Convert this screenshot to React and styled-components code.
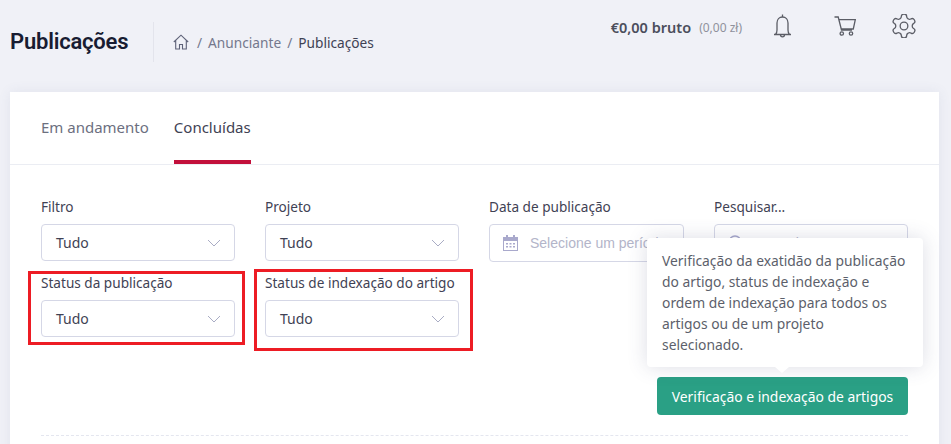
import styled, { createGlobalStyle } from "styled-components";

const GlobalStyle = createGlobalStyle`
  html, body {
    margin: 0;
    height: 444px;
    overflow: hidden;
    background: #f0f1f7;
    font-family: "Noto Sans", sans-serif;
  }
`;

const Page = styled.div`
  position: relative;
  width: 951px;
  height: 444px;
  overflow: hidden;
`;

const Header = styled.header`
  display: flex;
  align-items: flex-start;
  height: 92px;
  padding-left: 10px;
  box-sizing: border-box;
`;

const Title = styled.h1`
  width: 143px;
  height: 40px;
  margin: 22px 0 0;
  border-right: 1px solid #e3e4ec;
  font: 600 22px/40px Roboto, sans-serif;
  letter-spacing: -0.2px;
  color: #181c32;
`;

const Breadcrumbs = styled.nav`
  display: flex;
  align-items: center;
  gap: 6px;
  height: 40px;
  margin: 22px 0 0 19px;
  font-size: 13.7px;
  color: #74788d;
`;

const Current = styled.span`
  color: #3f4254;
`;

const HomeIcon = styled.svg`
  width: 16px;
  height: 16px;
  margin-right: 2px;
  color: #5e6278;
`;

const Account = styled.div`
  display: flex;
  align-items: center;
  margin-left: auto;
  height: 54px;
  padding-right: 35px;
`;

const Balance = styled.span`
  font-size: 14.5px;
  font-weight: 600;
  color: #4b4e5c;
`;

const Converted = styled.span`
  margin-left: 8px;
  font-size: 12px;
  color: #8f919c;
`;

const IconButton = styled.svg`
  width: ${(p) => p.$w}px;
  height: ${(p) => p.$h}px;
  margin-left: ${(p) => p.$gap}px;
  margin-top: -2px;
  color: #5b5d66;
  flex-shrink: 0;
`;

const Card = styled.main`
  margin: 0 12px 0 10px;
  height: 400px;
  background: #fff;
  box-shadow: 0 0 12px rgba(80, 85, 130, 0.09);
`;

const Tabs = styled.div`
  display: flex;
  gap: 25px;
  height: 72px;
  padding-left: 31px;
  border-bottom: 1px solid #ebedf3;
`;

const Tab = styled.div`
  display: flex;
  align-items: center;
  padding-top: 4px;
  padding-bottom: 2px;
  font-size: 15px;
  color: ${(p) => (p.$active ? "#3f4254" : "#6c6f7f")};
  box-sizing: border-box;
  height: 72px;
  border-bottom: 4px solid ${(p) => (p.$active ? "#c2103b" : "transparent")};
`;

const Filters = styled.div`
  display: grid;
  grid-template-columns: 194px 194px 195px 194px;
  column-gap: 30px;
  margin: 32px 0 0 31px;
`;

const Field = styled.div`
  height: 76px;
`;

const Label = styled.label`
  display: block;
  height: 27px;
  font-size: 13.6px;
  line-height: 20px;
  white-space: nowrap;
  color: #3f4254;
`;

const Select = styled.div`
  display: flex;
  align-items: center;
  justify-content: space-between;
  height: 37px;
  padding: 0 13px 0 14px;
  box-sizing: border-box;
  border: 1px solid #d5d7e6;
  border-radius: 4px;
  font-size: 14px;
  color: #3f4254;
`;

const Placeholder = styled.div`
  display: flex;
  align-items: center;
  gap: 12px;
  height: 38px;
  padding-left: 13px;
  box-sizing: border-box;
  border: 1px solid #d5d7e6;
  border-radius: 4px;
  font: 14px "Liberation Sans", sans-serif;
  color: #b3b5c9;
  white-space: nowrap;
  overflow: hidden;
`;

const Chevron = styled.svg`
  width: 14px;
  height: 8px;
  color: #a9acc4;
`;

const Actions = styled.div`
  display: flex;
  justify-content: flex-end;
  width: 867px;
  margin: 28px 0 0 31px;
  padding-bottom: 20px;
  border-bottom: 1px dashed #e4e6ef;
`;

const ButtonWrap = styled.div`
  position: relative;
`;

const Button = styled.button`
  display: block;
  width: 251px;
  height: 38px;
  padding: 0;
  border: 0;
  border-radius: 4px;
  background: #2aa085;
  font: 400 13.9px "Noto Sans", sans-serif;
  color: #fff;
`;

const Tooltip = styled.div`
  position: absolute;
  left: -10px;
  bottom: 48px;
  width: 276px;
  height: 129px;
  padding: 12px 15px;
  box-sizing: border-box;
  background: #fff;
  border-radius: 4px;
  box-shadow: 0 0 20px rgba(60, 65, 110, 0.18);
  font-size: 13.85px;
  line-height: 21px;
  white-space: nowrap;
  color: #5c5f6b;

  &::after {
    content: "";
    position: absolute;
    left: 128px;
    bottom: -6px;
    border-left: 7px solid transparent;
    border-right: 7px solid transparent;
    border-top: 6px solid #fff;
  }
`;

const Highlight = styled.div`
  position: absolute;
  left: ${(p) => p.$x}px;
  top: ${(p) => p.$y}px;
  width: ${(p) => p.$w}px;
  height: ${(p) => p.$h}px;
  box-sizing: border-box;
  border: 3px solid #ed1c24;
`;

const ChevronDown = () => (
  <Chevron viewBox="0 0 14 8" fill="none" stroke="currentColor" strokeWidth="1">
    <path d="M1 1l6 6 6-6" />
  </Chevron>
);

const filters = [
  { label: "Filtro" },
  { label: "Projeto" },
  { label: "Data de publicação", date: true },
  { label: "Pesquisar...", search: true },
  { label: "Status da publicação" },
  { label: "Status de indexação do artigo" },
];

const App = () => (
  <Page>
    <GlobalStyle />
    <Header>
      <Title>Publicações</Title>
      <Breadcrumbs>
        <HomeIcon viewBox="0 0 16 16" fill="none" stroke="currentColor" strokeWidth="1.1">
          <path d="M.8 8L8 1.200 15.200 8M2.700 6.500V15h3.800v-4.500h3V15h3.800V6.500" />
        </HomeIcon>
        <span>/</span>
        <span>Anunciante</span>
        <span>/</span>
        <Current>Publicações</Current>
      </Breadcrumbs>
      <Account>
        <Balance>€0,00 bruto</Balance>
        <Converted>(0,00 zł)</Converted>
        <IconButton $w={19} $h={24} $gap={31} viewBox="0 0 19 24" fill="none" stroke="currentColor" strokeWidth="1.3">
          <path d="M1 20.500h17M2.500 20.500c1-1 1.500-2.500 1.500-4.500V9c0-3.500 2.300-6 5.500-6S15 5.500 15 9v7c0 2 .5 3.500 1.500 4.500" />
          <path d="M7.500 20.800a2 2 0 0 0 4 0M9.500 .5V3" />
        </IconButton>
        <IconButton $w={22} $h={20} $gap={42} viewBox="0 0 22 20" fill="none" stroke="currentColor" strokeWidth="1.3">
          <path d="M.5 1h3.700l3.300 13h10.500M4.900 3.700h16.400l-2 9.300H7.200" />
          <circle cx="7.800" cy="17.500" r="1.700" />
          <circle cx="17" cy="17.500" r="1.700" />
        </IconButton>
        <IconButton $w={24} $h={24} $gap={36} viewBox="2 2 20 20" fill="none" stroke="currentColor" strokeWidth="1.1">
          <path d="M12.220 2h-.44a2 2 0 0 0-2 2v.18a2 2 0 0 1-1 1.730l-.43.25a2 2 0 0 1-2 0l-.15-.08a2 2 0 0 0-2.730.73l-.22.38a2 2 0 0 0 .73 2.730l.15.100a2 2 0 0 1 1 1.720v.510a2 2 0 0 1-1 1.740l-.15.090a2 2 0 0 0-.73 2.730l.22.380a2 2 0 0 0 2.730.730l.15-.080a2 2 0 0 1 2 0l.43.250a2 2 0 0 1 1 1.730V20a2 2 0 0 0 2 2h.44a2 2 0 0 0 2-2v-.18a2 2 0 0 1 1-1.730l.43-.25a2 2 0 0 1 2 0l.15.080a2 2 0 0 0 2.730-.730l.22-.390a2 2 0 0 0-.73-2.730l-.15-.080a2 2 0 0 1-1-1.740v-.500a2 2 0 0 1 1-1.740l.15-.090a2 2 0 0 0 .73-2.730l-.22-.380a2 2 0 0 0-2.730-.730l-.15.080a2 2 0 0 1-2 0l-.43-.250a2 2 0 0 1-1-1.730V4a2 2 0 0 0-2-2z" />
          <circle cx="12" cy="12" r="3.200" />
        </IconButton>
      </Account>
    </Header>
    <Card>
      <Tabs>
        <Tab>Em andamento</Tab>
        <Tab $active>Concluídas</Tab>
      </Tabs>
      <Filters>
        {filters.map((f) => (
          <Field key={f.label}>
            <Label>{f.label}</Label>
            {f.date ? (
              <Placeholder>
                <svg width="15" height="16" viewBox="0 0 15 16" fill="#a9a9cc">
                  <path d="M0 2h3V0h2v2h5V0h2v2h3v14H0zm1 4v9h13V6z" />
                  <path d="M3 8h2v1.500H3zm3.500 0h2v1.500h-2zM10 8h2v1.500h-2zm-7 3h2v1.500H3zm3.500 0h2v1.500h-2zm3.500 0h2v1.500h-2z" />
                </svg>
                Selecione um período
              </Placeholder>
            ) : f.search ? (
              <Placeholder>
                <svg width="16" height="16" viewBox="0 0 16 16" fill="none" stroke="#a9a9cc" strokeWidth="1.3">
                  <circle cx="7" cy="7" r="6" />
                  <path d="M11.500 11.500L15 15" />
                </svg>
                Pesquisar
              </Placeholder>
            ) : (
              <Select>
                Tudo
                <ChevronDown />
              </Select>
            )}
          </Field>
        ))}
      </Filters>
      <Actions>
        <ButtonWrap>
          <Tooltip>
            Verificação da exatidão da publicação
            <br />
            do artigo, status de indexação e
            <br />
            ordem de indexação para todos os
            <br />
            artigos ou de um projeto
            <br />
            selecionado.
          </Tooltip>
          <Button>Verificação e indexação de artigos</Button>
        </ButtonWrap>
      </Actions>
    </Card>
    <Highlight $x={28} $y={271} $w={217} $h={74} />
    <Highlight $x={254} $y={269} $w={219} $h={82} />
  </Page>
);

export default App;
